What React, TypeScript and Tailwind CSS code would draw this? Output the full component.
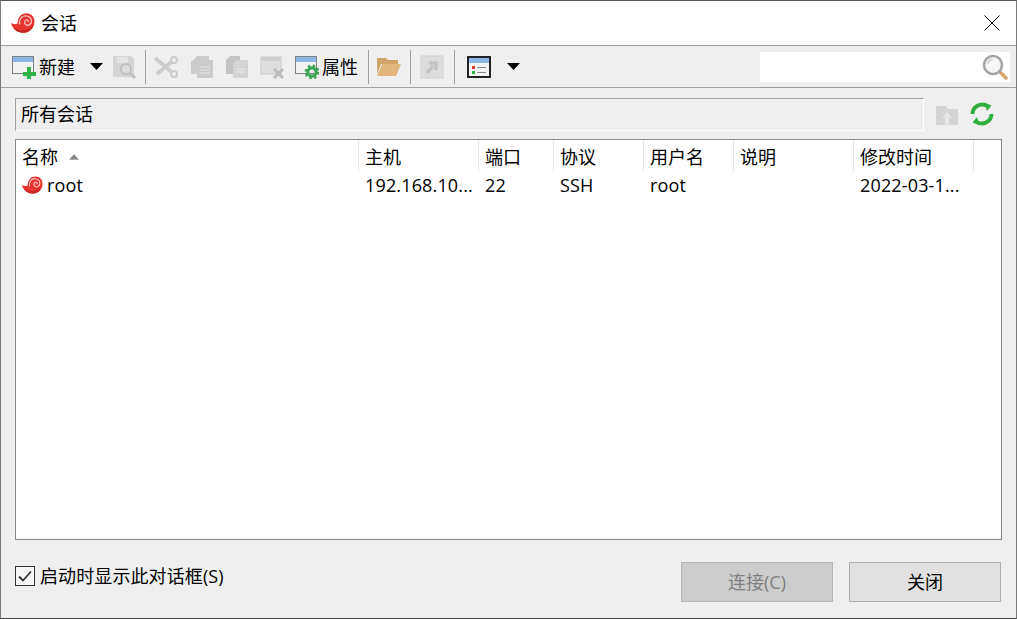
import React from "react";

const FONT = { fontFamily: '"Open Sans","Noto Sans CJK SC",sans-serif' };

function Snail({ className }: { className?: string }) {
  return (
    <svg viewBox="0 0 24 20" className={className}>
      <path d="M0 10 C3 11.5 5 11.5 6.5 10.5 C6.5 4 10.5 .2 15.5 .2 C20.5 .2 23.5 4 23.5 8.5 C23.5 14.5 19 19.8 12.5 19.8 C6 19.8 1.5 16 0 10Z" fill="#e8332e" />
      <path d="M2 14 C6 17.5 13 18.5 18 15.5 C20 14.5 21.5 13 22.5 11.5 C21.5 16 17.5 19.8 12.5 19.8 C8 19.8 4.5 18 2 14Z" fill="#c9221f" />
      <path d="M8.6 11.5 C7.5 6.5 11 2.6 15 2.8 C18.6 3 20.8 5.8 20.4 8.8 C20 11.6 17 13 15 11.8 C13 10.6 13.2 7.6 15.2 7 C16.6 6.6 17.8 7.8 17.2 9" fill="none" stroke="#f9c9c5" strokeWidth="1.3" />
    </svg>
  );
}

function Caret() {
  return <svg viewBox="0 0 13 7" className="w-[13px] h-[7px]"><path d="M0 0H13L6.5 7Z" fill="#000" /></svg>;
}

function Sep() {
  return <div className="w-px h-[34px] bg-[#a0a0a0]" />;
}

function WindowIcon({ children }: { children?: React.ReactNode }) {
  return (
    <svg viewBox="0 0 24 24" className="w-6 h-6 shrink-0">
      <rect x=".5" y="1.5" width="21" height="17" fill="#f2f2f2" stroke="#808080" />
      <rect x="1" y="2" width="20" height="5" fill="#8db6e6" />
      {children}
    </svg>
  );
}

function Disabled({ children, className = "w-6 h-6" }: { children: React.ReactNode; className?: string }) {
  return <svg viewBox="0 0 24 24" className={`${className} shrink-0 blur-[0.5px]`}>{children}</svg>;
}

const columns: [string, string][] = [
  ["主机", "w-[120px]"],
  ["端口", "w-[75px]"],
  ["协议", "w-[90px]"],
  ["用户名", "w-[90px]"],
  ["说明", "w-[120px]"],
  ["修改时间", "w-[120px]"],
];

const cells: [string, string][] = [
  ["192.168.10...", "w-[120px]"],
  ["22", "w-[75px]"],
  ["SSH", "w-[90px]"],
  ["root", "w-[90px]"],
  ["", "w-[120px]"],
  ["2022-03-1...", "w-[120px]"],
];

export default function App() {
  return (
    <div
      style={FONT}
      className="w-[1017px] h-[619px] flex flex-col overflow-hidden bg-[#efefef] text-[18px] leading-[24px] text-black border border-[#7a7a7a] border-t-[#555555] border-b-[#444444]"
    >
      {/* Title bar */}
      <div className="h-[44px] shrink-0 bg-white flex items-center pl-[10px] pr-[16px]">
        <Snail className="w-6 h-5 mr-[6px] -mt-[1px]" />
        <span className="-mt-[1px]">会话</span>
        <svg viewBox="0 0 16 16" className="w-4 h-4 ml-auto">
          <path d="M.5.5L15.5 15.5M15.5.5L.5 15.5" stroke="#000" strokeWidth="1" fill="none" />
        </svg>
      </div>

      {/* Toolbar */}
      <div className="h-[43px] shrink-0 flex items-center pl-[11px] pr-[6px] border-y border-[#a0a0a0]">
        <WindowIcon>
          <path d="M15 12H19V17H24V21H19V24H15V21H11V17H15Z" fill="#2fb344" />
        </WindowIcon>
        <span className="ml-[3px] w-[36px]">新建</span>
        <div className="ml-[15px]"><Caret /></div>
        <div className="ml-[9px]">
          <Disabled>
            <path d="M1 1H19L22 4V22H1Z" fill="#d4d4d4" />
            <rect x="5" y="2" width="11" height="6" fill="#e4e4e4" />
            <circle cx="14" cy="14" r="5" fill="#dedede" stroke="#c0c0c0" strokeWidth="2" />
            <path d="M18 18L23 23" stroke="#c0c0c0" strokeWidth="3" />
          </Disabled>
        </div>
        <div className="ml-[9px] mr-[8px]"><Sep /></div>
        <Disabled>
          <path d="M1 3L20 19M22 3L3 19" stroke="#cdcdcd" strokeWidth="4" fill="none" />
          <circle cx="20" cy="5" r="3" fill="#efefef" stroke="#cdcdcd" strokeWidth="2.2" />
          <circle cx="20" cy="19" r="3" fill="#efefef" stroke="#cdcdcd" strokeWidth="2.2" />
        </Disabled>
        <div className="ml-[12px]">
          <Disabled>
            <path d="M1 7L7 1H19V5H23V23H7V19H1Z" fill="#cbcbcb" />
            <path d="M10 12H20M10 15H20M10 18H20" stroke="#e6e6e6" strokeWidth="1.2" />
          </Disabled>
        </div>
        <div className="ml-[11px]">
          <Disabled>
            <path d="M1 5L5 1H15V19H1Z" fill="#c4c4c4" />
            <path d="M8 9L12 5H23V23H8Z" fill="#d4d4d4" />
            <path d="M11 14H20M11 17H20" stroke="#ececec" strokeWidth="1.2" />
          </Disabled>
        </div>
        <div className="ml-[11px]">
          <Disabled>
            <rect x="1" y="2" width="20" height="17" fill="#dedede" stroke="#c8c8c8" />
            <rect x="1" y="2" width="20" height="4" fill="#d0d0d0" />
            <path d="M14 14L23 23M23 14L14 23" stroke="#bbbbbb" strokeWidth="3" />
          </Disabled>
        </div>
        <div className="ml-[11px]">
          <WindowIcon>
            <circle cx="17" cy="17" r="4.2" fill="none" stroke="#3aa655" strokeWidth="3.2" />
            <circle cx="17" cy="17" r="6.3" fill="none" stroke="#3aa655" strokeWidth="2.4" strokeDasharray="2.4 2.55" />
          </WindowIcon>
        </div>
        <span className="ml-[3px] w-[36px]">属性</span>
        <div className="ml-[10px] mr-[8px]"><Sep /></div>
        <svg viewBox="0 0 24 20" className="w-6 h-5 shrink-0 blur-[0.3px]">
          <path d="M0 1H9L11 3H21V7H4L0 17Z" fill="#cfa46a" />
          <path d="M0 19L5 7H24L19 19Z" fill="#e0b67c" />
        </svg>
        <div className="ml-[9px] mr-[9px]"><Sep /></div>
        <Disabled>
          <rect x="1" y="1" width="22" height="22" fill="#dcdcdc" stroke="#cfcfcf" />
          <path d="M7 18L13 11M9 8H16V15" stroke="#c4c4c4" strokeWidth="3.4" fill="none" />
        </Disabled>
        <div className="ml-[10px] mr-[12px]"><Sep /></div>
        <svg viewBox="0 0 24 22" className="w-6 h-[22px] shrink-0">
          <rect x="1" y="1" width="22" height="20" fill="#f4f4f4" stroke="#222" strokeWidth="2" />
          <rect x="2" y="2" width="20" height="5" fill="#8db6e6" />
          <rect x="5" y="10" width="3" height="3" fill="#e53935" />
          <rect x="5" y="15" width="3" height="3" fill="#2fb344" />
          <path d="M10 11.5H19M10 16.5H19" stroke="#888" strokeWidth="1.2" />
        </svg>
        <div className="ml-[16px] -mr-px"><Caret /></div>
        <div className="ml-auto w-[250px] h-[30px] bg-white flex items-center justify-end pr-[2px]">
          <svg viewBox="0 0 26 26" className="w-[26px] h-[26px]">
            <path d="M17 17L24 24" stroke="#d9a26e" strokeWidth="3.4" strokeLinecap="round" />
            <circle cx="11" cy="11" r="9" fill="#f6f6f6" stroke="#a5a5a5" strokeWidth="2.6" />
            <path d="M6 10C6 7 8 5.5 11 5.5" stroke="#d0d0d0" strokeWidth="1.5" fill="none" />
          </svg>
        </div>
      </div>

      {/* Path bar */}
      <div className="h-[33px] shrink-0 mt-[10px] ml-[14px] mr-[14px] flex items-center">
        <div className="w-[909px] h-full flex items-center pl-[5px] pb-[2px] border border-t-[#a0a0a0] border-l-[#a0a0a0] border-r-white border-b-white">
          所有会话
        </div>
        <svg viewBox="0 0 24 22" className="w-6 h-[22px] ml-[11px] blur-[0.4px]">
          <path d="M1 2H11L13 5H23V21H1Z" fill="#d4d4d4" />
          <path d="M12 8L7 14H10V22H14V14H17Z" fill="#e6e6e6" />
        </svg>
        <svg viewBox="0 0 24 24" className="w-6 h-6 ml-[11px] -mt-[1px]">
          <path d="M2.5 12A9.5 9.5 0 0 1 17 4" fill="none" stroke="#2fae3f" strokeWidth="3.8" />
          <path d="M21.5 12A9.5 9.5 0 0 1 7 20" fill="none" stroke="#2fae3f" strokeWidth="3.8" />
          <path d="M14.5 .8L21.5 3.5L17 9Z" fill="#2fae3f" />
          <path d="M9.5 23.2L2.5 20.5L7 15Z" fill="#2fae3f" />
        </svg>
      </div>

      {/* Table */}
      <div className="h-[401px] shrink-0 mt-[8px] mx-[14px] bg-white border border-[#828790]">
        <div className="h-[33px] flex">
          <div className="w-[343px] h-[31px] pl-[6px] flex items-center border-r border-[#e5e5e5] pt-[2px]">
            <span>名称</span>
            <svg viewBox="0 0 9 5" className="w-[10px] h-[6px] ml-[11px]"><path d="M4.5 0L9 5H0Z" fill="#8a8a8a" /></svg>
          </div>
          {columns.map(([t, w]) => (
            <div key={t} className={`${w} h-[31px] pl-[6px] flex items-center border-r border-[#e5e5e5] pt-[2px]`}>{t}</div>
          ))}
        </div>
        <div className="h-[24px] flex items-center tracking-[0.15px]">
          <div className="w-[343px] pl-[6px] flex items-center">
            <Snail className="w-[21px] h-[18px] mr-[4px] -mt-[1px]" />
            root
          </div>
          {cells.map(([t, w], i) => (
            <div key={i} className={`${w} pl-[6px]`}>{t}</div>
          ))}
        </div>
      </div>

      {/* Footer */}
      <div className="flex-1 mx-[14px] flex">
        <div className="flex items-center h-[24px] mt-[24px]">
          <div className="w-[20px] h-[20px] border border-[#333] flex items-center justify-center bg-[#f7f7f7]">
            <svg viewBox="0 0 14 12" className="w-[14px] h-[12px]"><path d="M1 6.5L5 10.5L13 1.5" fill="none" stroke="#333" strokeWidth="1.8" /></svg>
          </div>
          <span className="ml-[5px] tracking-[0.1px]">启动时显示此对话框(S)</span>
        </div>
        <div className="ml-auto flex gap-[16px] mt-[22px] mr-[1px]">
          <div className="w-[152px] h-[40px] bg-[#cccccc] border border-[#b5b5b5] text-[#808080] flex items-center justify-center">连接(C)</div>
          <div className="w-[152px] h-[40px] bg-[#e1e1e1] border border-[#adadad] flex items-center justify-center">关闭</div>
        </div>
      </div>
    </div>
  );
}
